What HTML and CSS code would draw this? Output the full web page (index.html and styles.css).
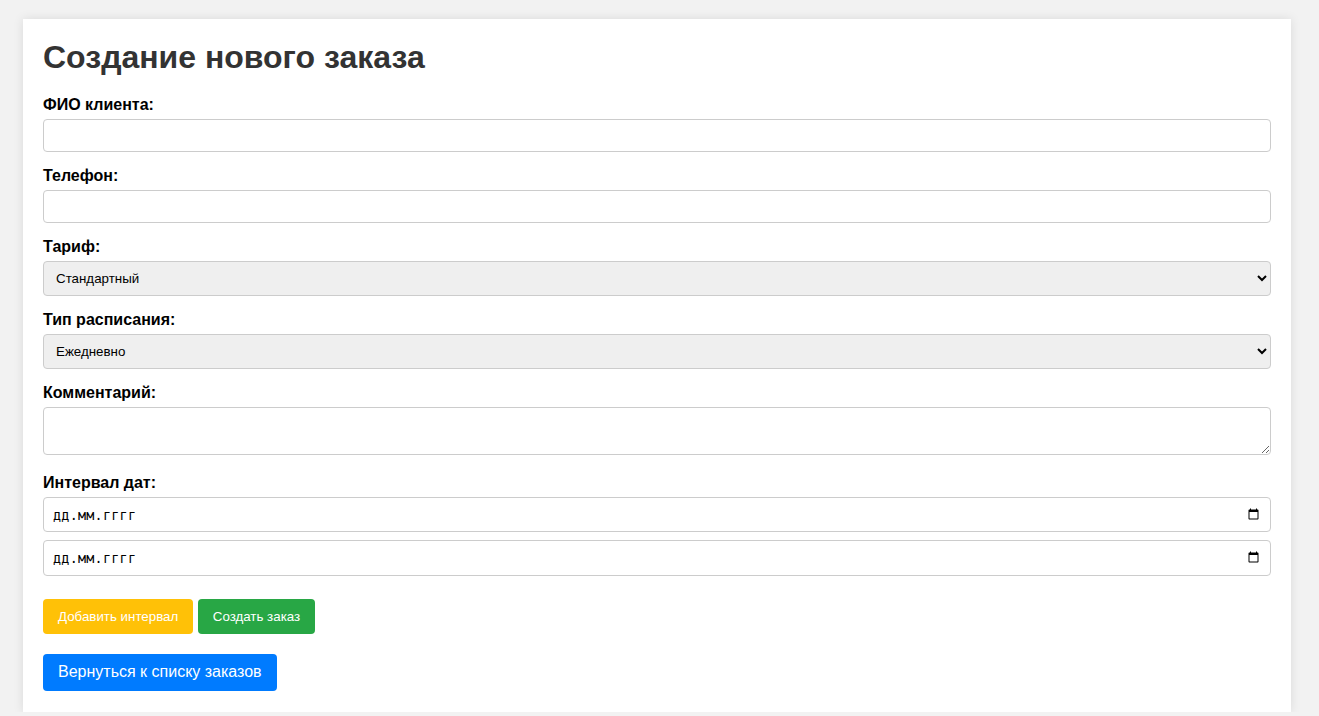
FILE: index.html
```html
<!DOCTYPE html>
<html lang="ru">
<head>
<meta charset="utf-8">
<title>Создание нового заказа</title>
<link rel="stylesheet" href="styles.css">
</head>
<body>
<div class="container">
  <h1 class="title">Создание нового заказа</h1>
  <form class="order-form">
    <div class="form-group">
      <label for="fio">ФИО клиента:</label>
      <input type="text" id="fio">
    </div>
    <div class="form-group">
      <label for="phone">Телефон:</label>
      <input type="text" id="phone">
    </div>
    <div class="form-group">
      <label for="tariff">Тариф:</label>
      <select id="tariff">
        <option>Стандартный</option>
      </select>
    </div>
    <div class="form-group">
      <label for="schedule">Тип расписания:</label>
      <select id="schedule">
        <option>Ежедневно</option>
      </select>
    </div>
    <div class="form-group">
      <label for="comment">Комментарий:</label>
      <textarea id="comment"></textarea>
    </div>
    <div class="form-group">
      <label>Интервал дат:</label>
      <div class="interval">
        <input type="date" class="date-input">
        <span class="date-mask">дд.мм.гггг</span>
      </div>
      <div class="interval">
        <input type="date" class="date-input">
        <span class="date-mask">дд.мм.гггг</span>
      </div>
    </div>
    <div class="actions">
      <button type="button" class="btn btn-warning">Добавить интервал</button>
      <button type="button" class="btn btn-success">Создать заказ</button>
    </div>
  </form>
  <a href="#" class="btn-link">Вернуться к списку заказов</a>
</div>
</body>
</html>
```
FILE: styles.css
```css
html, body {
  margin: 0;
  padding: 0;
}
body {
  background: #f2f2f2;
  font-family: "Liberation Sans", Arial, sans-serif;
  padding-top: 19px;
}
.container {
  background: #fff;
  margin: 0 28px 0 23px;
  padding: 20px 20px 21px;
  box-shadow: 0 0 10px rgba(0, 0, 0, 0.1);
}
.title {
  color: #333;
  font-size: 32px;
  margin: 0 0 20px;
}
.form-group {
  margin-bottom: 15px;
}
.form-group label {
  display: block;
  font-weight: bold;
  margin-bottom: 5px;
  color: #000;
}
.form-group input,
.form-group select,
.form-group textarea {
  width: 100%;
  box-sizing: border-box;
  padding: 8px;
  border: 1px solid #ccc;
  border-radius: 4px;
}
.interval {
  position: relative;
  margin-bottom: 8px;
}
.interval:last-child {
  margin-bottom: 0;
}
.date-input::-webkit-datetime-edit {
  color: transparent;
}
.date-mask {
  position: absolute;
  left: 10px;
  top: 50%;
  transform: translateY(-50%);
  font-family: monospace;
  font-size: 13.333px;
  letter-spacing: 0.3px;
  color: #000;
  pointer-events: none;
}
.actions {
  padding-top: 8px;
}
.btn {
  border: none;
  border-radius: 4px;
  padding: 10px 15px;
  color: #fff;
  font-family: "Liberation Sans", Arial, sans-serif;
  font-size: 13.333px;
  cursor: pointer;
}
.btn-warning {
  background: #ffc107;
}
.btn-success {
  background: #28a745;
}
.btn-link {
  display: inline-block;
  margin-top: 20px;
  background: #007bff;
  color: #fff;
  text-decoration: none;
  padding: 9.5px 15px;
  border-radius: 4px;
  font-size: 16px;
}
```
